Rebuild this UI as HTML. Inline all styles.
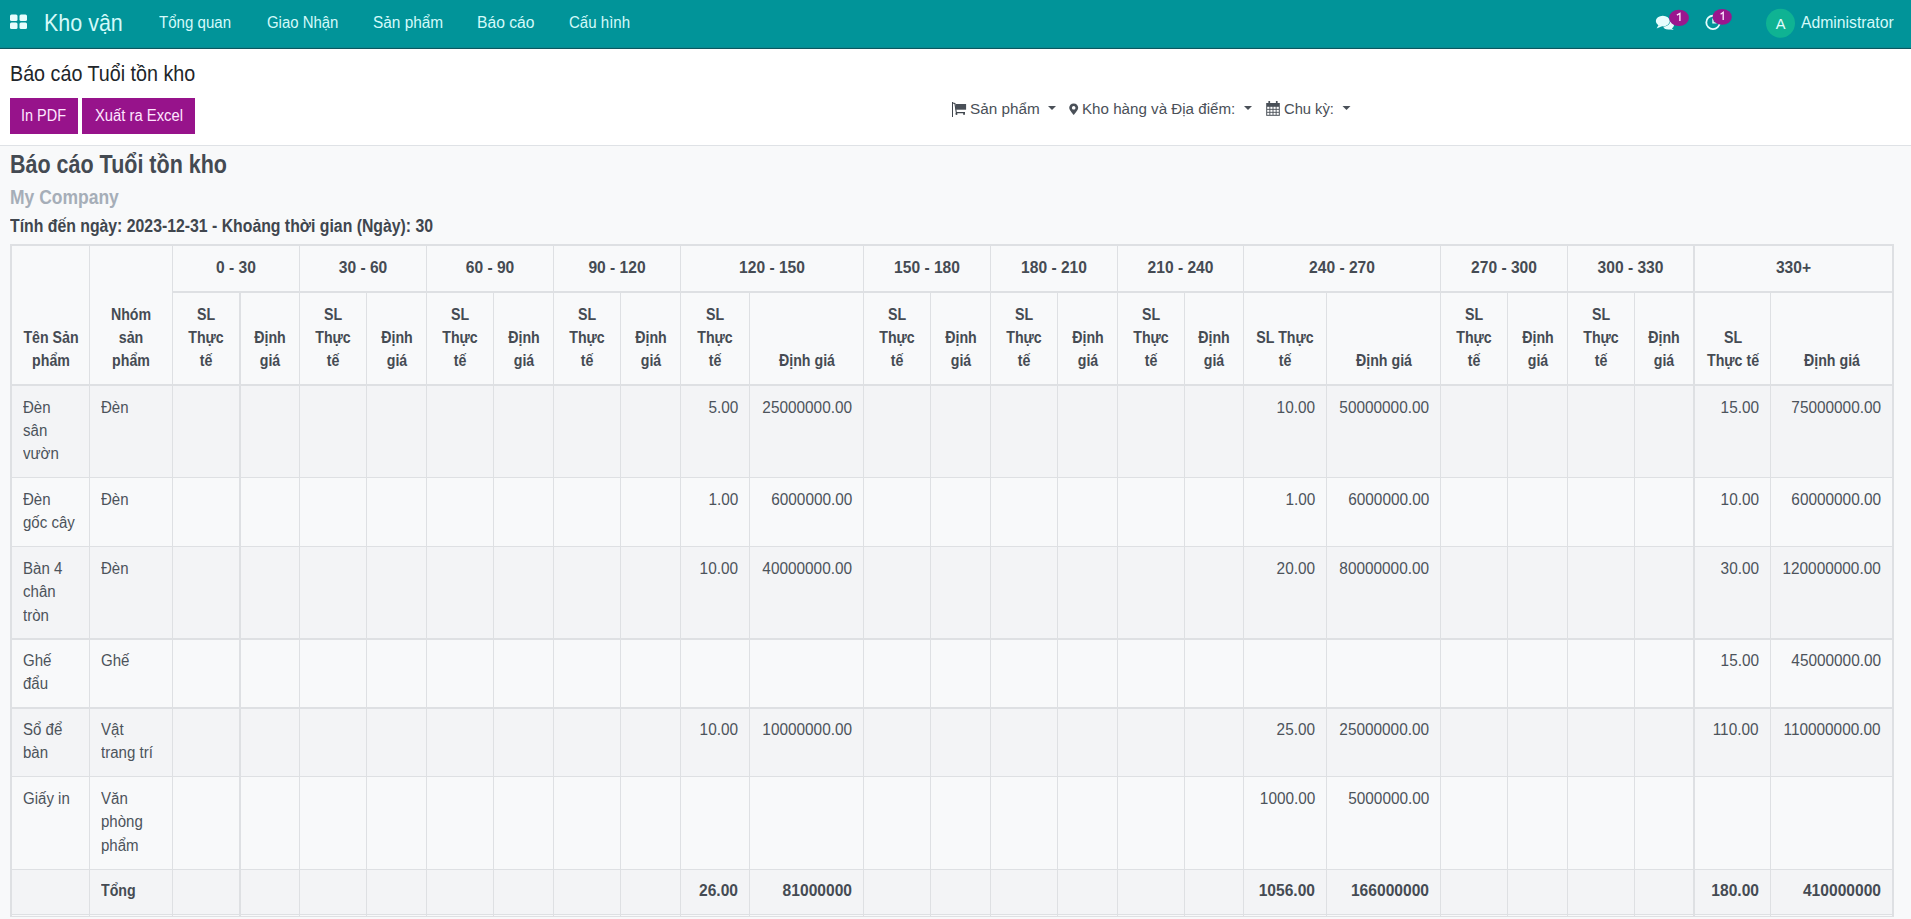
<!DOCTYPE html>
<html><head><meta charset="utf-8"><title>Báo cáo Tuổi tồn kho</title>
<style>
html,body{margin:0;padding:0;width:1911px;height:919px;overflow:hidden;background:#f8f9fa;}
body{position:relative;font-family:"Liberation Sans", sans-serif;}
.t{position:absolute;white-space:nowrap;line-height:1;}
</style></head><body>
<div style="position:absolute;left:0px;top:0px;width:1911px;height:48px;background:#019499;"></div><div style="position:absolute;left:0px;top:47px;width:1911px;height:1px;background:#0a8a92;"></div><div style="position:absolute;left:0px;top:48px;width:1911px;height:1px;background:#0b5860;"></div><div style="position:absolute;left:0px;top:49px;width:1911px;height:96px;background:#ffffff;"></div><div style="position:absolute;left:0px;top:145px;width:1911px;height:1px;background:#dfe2e6;"></div><div style="position:absolute;left:0px;top:146px;width:1911px;height:773px;background:#f8f9fa;"></div><div style="position:absolute;left:10px;top:386px;width:1884px;height:91px;background:#f3f4f6;"></div><div style="position:absolute;left:10px;top:547px;width:1884px;height:91px;background:#f3f4f6;"></div><div style="position:absolute;left:10px;top:709px;width:1884px;height:67px;background:#f3f4f6;"></div><div style="position:absolute;left:10px;top:870px;width:1884px;height:44px;background:#f3f4f6;"></div><div style="position:absolute;left:10px;top:244px;width:1884px;height:2px;background:#dee0e3;"></div><div style="position:absolute;left:10px;top:384px;width:1884px;height:2px;background:#dee0e3;"></div><div style="position:absolute;left:10px;top:477px;width:1884px;height:1px;background:#dee0e3;"></div><div style="position:absolute;left:10px;top:546px;width:1884px;height:1px;background:#dee0e3;"></div><div style="position:absolute;left:10px;top:638px;width:1884px;height:2px;background:#dee0e3;"></div><div style="position:absolute;left:10px;top:707px;width:1884px;height:2px;background:#dee0e3;"></div><div style="position:absolute;left:10px;top:776px;width:1884px;height:1px;background:#dee0e3;"></div><div style="position:absolute;left:10px;top:869px;width:1884px;height:1px;background:#dee0e3;"></div><div style="position:absolute;left:10px;top:914px;width:1884px;height:1px;background:#dee0e3;"></div><div style="position:absolute;left:10px;top:916px;width:1884px;height:1px;background:#dee0e3;"></div><div style="position:absolute;left:172px;top:291px;width:1722px;height:2px;background:#dee0e3;"></div><div style="position:absolute;left:10px;top:244px;width:2px;height:673px;background:#dee0e3;"></div><div style="position:absolute;left:89px;top:244px;width:1px;height:673px;background:#dee0e3;"></div><div style="position:absolute;left:172px;top:244px;width:1px;height:673px;background:#dee0e3;"></div><div style="position:absolute;left:239px;top:291px;width:2px;height:626px;background:#dee0e3;"></div><div style="position:absolute;left:299px;top:244px;width:1px;height:673px;background:#dee0e3;"></div><div style="position:absolute;left:366px;top:291px;width:1px;height:626px;background:#dee0e3;"></div><div style="position:absolute;left:426px;top:244px;width:1px;height:673px;background:#dee0e3;"></div><div style="position:absolute;left:493px;top:291px;width:1px;height:626px;background:#dee0e3;"></div><div style="position:absolute;left:553px;top:244px;width:1px;height:673px;background:#dee0e3;"></div><div style="position:absolute;left:620px;top:291px;width:1px;height:626px;background:#dee0e3;"></div><div style="position:absolute;left:680px;top:244px;width:1px;height:673px;background:#dee0e3;"></div><div style="position:absolute;left:749px;top:291px;width:1px;height:626px;background:#dee0e3;"></div><div style="position:absolute;left:863px;top:244px;width:1px;height:673px;background:#dee0e3;"></div><div style="position:absolute;left:930px;top:291px;width:1px;height:626px;background:#dee0e3;"></div><div style="position:absolute;left:990px;top:244px;width:1px;height:673px;background:#dee0e3;"></div><div style="position:absolute;left:1057px;top:291px;width:1px;height:626px;background:#dee0e3;"></div><div style="position:absolute;left:1117px;top:244px;width:1px;height:673px;background:#dee0e3;"></div><div style="position:absolute;left:1184px;top:291px;width:1px;height:626px;background:#dee0e3;"></div><div style="position:absolute;left:1243px;top:244px;width:1px;height:673px;background:#dee0e3;"></div><div style="position:absolute;left:1326px;top:291px;width:1px;height:626px;background:#dee0e3;"></div><div style="position:absolute;left:1440px;top:244px;width:1px;height:673px;background:#dee0e3;"></div><div style="position:absolute;left:1507px;top:291px;width:1px;height:626px;background:#dee0e3;"></div><div style="position:absolute;left:1567px;top:244px;width:1px;height:673px;background:#dee0e3;"></div><div style="position:absolute;left:1634px;top:291px;width:1px;height:626px;background:#dee0e3;"></div><div style="position:absolute;left:1693px;top:244px;width:2px;height:673px;background:#dee0e3;"></div><div style="position:absolute;left:1770px;top:291px;width:1px;height:626px;background:#dee0e3;"></div><div style="position:absolute;left:1892px;top:244px;width:2px;height:673px;background:#dee0e3;"></div><div style="position:absolute;left:10px;top:98px;width:68px;height:36px;background:#97138b;"></div><div style="position:absolute;left:82px;top:98px;width:113px;height:36px;background:#97138b;"></div><div class="t" id="t0" style="left:-64.00px;width:600px;text-align:center;top:259.79px;font-size:15.6px;color:#454b53;font-weight:700;">0 - 30</div><div class="t" id="t1" style="left:63.00px;width:600px;text-align:center;top:259.79px;font-size:15.6px;color:#454b53;font-weight:700;">30 - 60</div><div class="t" id="t2" style="left:190.00px;width:600px;text-align:center;top:259.79px;font-size:15.6px;color:#454b53;font-weight:700;">60 - 90</div><div class="t" id="t3" style="left:317.00px;width:600px;text-align:center;top:259.79px;font-size:15.6px;color:#454b53;font-weight:700;">90 - 120</div><div class="t" id="t4" style="left:472.00px;width:600px;text-align:center;top:259.79px;font-size:15.6px;color:#454b53;font-weight:700;">120 - 150</div><div class="t" id="t5" style="left:627.00px;width:600px;text-align:center;top:259.79px;font-size:15.6px;color:#454b53;font-weight:700;">150 - 180</div><div class="t" id="t6" style="left:754.00px;width:600px;text-align:center;top:259.79px;font-size:15.6px;color:#454b53;font-weight:700;">180 - 210</div><div class="t" id="t7" style="left:880.50px;width:600px;text-align:center;top:259.79px;font-size:15.6px;color:#454b53;font-weight:700;">210 - 240</div><div class="t" id="t8" style="left:1042.00px;width:600px;text-align:center;top:259.79px;font-size:15.6px;color:#454b53;font-weight:700;">240 - 270</div><div class="t" id="t9" style="left:1204.00px;width:600px;text-align:center;top:259.79px;font-size:15.6px;color:#454b53;font-weight:700;">270 - 300</div><div class="t" id="t10" style="left:1330.50px;width:600px;text-align:center;top:259.79px;font-size:15.6px;color:#454b53;font-weight:700;">300 - 330</div><div class="t" id="t11" style="left:1493.50px;width:600px;text-align:center;top:259.79px;font-size:15.6px;color:#454b53;font-weight:700;">330+</div><div class="t" id="t12" style="left:-249.50px;width:600px;text-align:center;top:329.79px;font-size:15.6px;color:#454b53;font-weight:700;transform:scaleX(0.9100);transform-origin:50% 0;">Tên Sản</div><div class="t" id="t13" style="left:-249.50px;width:600px;text-align:center;top:352.79px;font-size:15.6px;color:#454b53;font-weight:700;transform:scaleX(0.9100);transform-origin:50% 0;">phẩm</div><div class="t" id="t14" style="left:-169.00px;width:600px;text-align:center;top:306.79px;font-size:15.6px;color:#454b53;font-weight:700;transform:scaleX(0.9100);transform-origin:50% 0;">Nhóm</div><div class="t" id="t15" style="left:-169.00px;width:600px;text-align:center;top:329.79px;font-size:15.6px;color:#454b53;font-weight:700;transform:scaleX(0.9100);transform-origin:50% 0;">sản</div><div class="t" id="t16" style="left:-169.00px;width:600px;text-align:center;top:352.79px;font-size:15.6px;color:#454b53;font-weight:700;transform:scaleX(0.9100);transform-origin:50% 0;">phẩm</div><div class="t" id="t17" style="left:-94.00px;width:600px;text-align:center;top:306.79px;font-size:15.6px;color:#454b53;font-weight:700;transform:scaleX(0.9100);transform-origin:50% 0;">SL</div><div class="t" id="t18" style="left:-94.00px;width:600px;text-align:center;top:329.79px;font-size:15.6px;color:#454b53;font-weight:700;transform:scaleX(0.9100);transform-origin:50% 0;">Thực</div><div class="t" id="t19" style="left:-94.00px;width:600px;text-align:center;top:352.79px;font-size:15.6px;color:#454b53;font-weight:700;transform:scaleX(0.9100);transform-origin:50% 0;">tế</div><div class="t" id="t20" style="left:-30.00px;width:600px;text-align:center;top:329.79px;font-size:15.6px;color:#454b53;font-weight:700;transform:scaleX(0.9100);transform-origin:50% 0;">Định</div><div class="t" id="t21" style="left:-30.00px;width:600px;text-align:center;top:352.79px;font-size:15.6px;color:#454b53;font-weight:700;transform:scaleX(0.9100);transform-origin:50% 0;">giá</div><div class="t" id="t22" style="left:33.00px;width:600px;text-align:center;top:306.79px;font-size:15.6px;color:#454b53;font-weight:700;transform:scaleX(0.9100);transform-origin:50% 0;">SL</div><div class="t" id="t23" style="left:33.00px;width:600px;text-align:center;top:329.79px;font-size:15.6px;color:#454b53;font-weight:700;transform:scaleX(0.9100);transform-origin:50% 0;">Thực</div><div class="t" id="t24" style="left:33.00px;width:600px;text-align:center;top:352.79px;font-size:15.6px;color:#454b53;font-weight:700;transform:scaleX(0.9100);transform-origin:50% 0;">tế</div><div class="t" id="t25" style="left:96.50px;width:600px;text-align:center;top:329.79px;font-size:15.6px;color:#454b53;font-weight:700;transform:scaleX(0.9100);transform-origin:50% 0;">Định</div><div class="t" id="t26" style="left:96.50px;width:600px;text-align:center;top:352.79px;font-size:15.6px;color:#454b53;font-weight:700;transform:scaleX(0.9100);transform-origin:50% 0;">giá</div><div class="t" id="t27" style="left:160.00px;width:600px;text-align:center;top:306.79px;font-size:15.6px;color:#454b53;font-weight:700;transform:scaleX(0.9100);transform-origin:50% 0;">SL</div><div class="t" id="t28" style="left:160.00px;width:600px;text-align:center;top:329.79px;font-size:15.6px;color:#454b53;font-weight:700;transform:scaleX(0.9100);transform-origin:50% 0;">Thực</div><div class="t" id="t29" style="left:160.00px;width:600px;text-align:center;top:352.79px;font-size:15.6px;color:#454b53;font-weight:700;transform:scaleX(0.9100);transform-origin:50% 0;">tế</div><div class="t" id="t30" style="left:223.50px;width:600px;text-align:center;top:329.79px;font-size:15.6px;color:#454b53;font-weight:700;transform:scaleX(0.9100);transform-origin:50% 0;">Định</div><div class="t" id="t31" style="left:223.50px;width:600px;text-align:center;top:352.79px;font-size:15.6px;color:#454b53;font-weight:700;transform:scaleX(0.9100);transform-origin:50% 0;">giá</div><div class="t" id="t32" style="left:287.00px;width:600px;text-align:center;top:306.79px;font-size:15.6px;color:#454b53;font-weight:700;transform:scaleX(0.9100);transform-origin:50% 0;">SL</div><div class="t" id="t33" style="left:287.00px;width:600px;text-align:center;top:329.79px;font-size:15.6px;color:#454b53;font-weight:700;transform:scaleX(0.9100);transform-origin:50% 0;">Thực</div><div class="t" id="t34" style="left:287.00px;width:600px;text-align:center;top:352.79px;font-size:15.6px;color:#454b53;font-weight:700;transform:scaleX(0.9100);transform-origin:50% 0;">tế</div><div class="t" id="t35" style="left:350.50px;width:600px;text-align:center;top:329.79px;font-size:15.6px;color:#454b53;font-weight:700;transform:scaleX(0.9100);transform-origin:50% 0;">Định</div><div class="t" id="t36" style="left:350.50px;width:600px;text-align:center;top:352.79px;font-size:15.6px;color:#454b53;font-weight:700;transform:scaleX(0.9100);transform-origin:50% 0;">giá</div><div class="t" id="t37" style="left:415.00px;width:600px;text-align:center;top:306.79px;font-size:15.6px;color:#454b53;font-weight:700;transform:scaleX(0.9100);transform-origin:50% 0;">SL</div><div class="t" id="t38" style="left:415.00px;width:600px;text-align:center;top:329.79px;font-size:15.6px;color:#454b53;font-weight:700;transform:scaleX(0.9100);transform-origin:50% 0;">Thực</div><div class="t" id="t39" style="left:415.00px;width:600px;text-align:center;top:352.79px;font-size:15.6px;color:#454b53;font-weight:700;transform:scaleX(0.9100);transform-origin:50% 0;">tế</div><div class="t" id="t40" style="left:506.50px;width:600px;text-align:center;top:352.79px;font-size:15.6px;color:#454b53;font-weight:700;transform:scaleX(0.9100);transform-origin:50% 0;">Định giá</div><div class="t" id="t41" style="left:597.00px;width:600px;text-align:center;top:306.79px;font-size:15.6px;color:#454b53;font-weight:700;transform:scaleX(0.9100);transform-origin:50% 0;">SL</div><div class="t" id="t42" style="left:597.00px;width:600px;text-align:center;top:329.79px;font-size:15.6px;color:#454b53;font-weight:700;transform:scaleX(0.9100);transform-origin:50% 0;">Thực</div><div class="t" id="t43" style="left:597.00px;width:600px;text-align:center;top:352.79px;font-size:15.6px;color:#454b53;font-weight:700;transform:scaleX(0.9100);transform-origin:50% 0;">tế</div><div class="t" id="t44" style="left:660.50px;width:600px;text-align:center;top:329.79px;font-size:15.6px;color:#454b53;font-weight:700;transform:scaleX(0.9100);transform-origin:50% 0;">Định</div><div class="t" id="t45" style="left:660.50px;width:600px;text-align:center;top:352.79px;font-size:15.6px;color:#454b53;font-weight:700;transform:scaleX(0.9100);transform-origin:50% 0;">giá</div><div class="t" id="t46" style="left:724.00px;width:600px;text-align:center;top:306.79px;font-size:15.6px;color:#454b53;font-weight:700;transform:scaleX(0.9100);transform-origin:50% 0;">SL</div><div class="t" id="t47" style="left:724.00px;width:600px;text-align:center;top:329.79px;font-size:15.6px;color:#454b53;font-weight:700;transform:scaleX(0.9100);transform-origin:50% 0;">Thực</div><div class="t" id="t48" style="left:724.00px;width:600px;text-align:center;top:352.79px;font-size:15.6px;color:#454b53;font-weight:700;transform:scaleX(0.9100);transform-origin:50% 0;">tế</div><div class="t" id="t49" style="left:787.50px;width:600px;text-align:center;top:329.79px;font-size:15.6px;color:#454b53;font-weight:700;transform:scaleX(0.9100);transform-origin:50% 0;">Định</div><div class="t" id="t50" style="left:787.50px;width:600px;text-align:center;top:352.79px;font-size:15.6px;color:#454b53;font-weight:700;transform:scaleX(0.9100);transform-origin:50% 0;">giá</div><div class="t" id="t51" style="left:851.00px;width:600px;text-align:center;top:306.79px;font-size:15.6px;color:#454b53;font-weight:700;transform:scaleX(0.9100);transform-origin:50% 0;">SL</div><div class="t" id="t52" style="left:851.00px;width:600px;text-align:center;top:329.79px;font-size:15.6px;color:#454b53;font-weight:700;transform:scaleX(0.9100);transform-origin:50% 0;">Thực</div><div class="t" id="t53" style="left:851.00px;width:600px;text-align:center;top:352.79px;font-size:15.6px;color:#454b53;font-weight:700;transform:scaleX(0.9100);transform-origin:50% 0;">tế</div><div class="t" id="t54" style="left:914.00px;width:600px;text-align:center;top:329.79px;font-size:15.6px;color:#454b53;font-weight:700;transform:scaleX(0.9100);transform-origin:50% 0;">Định</div><div class="t" id="t55" style="left:914.00px;width:600px;text-align:center;top:352.79px;font-size:15.6px;color:#454b53;font-weight:700;transform:scaleX(0.9100);transform-origin:50% 0;">giá</div><div class="t" id="t56" style="left:985.00px;width:600px;text-align:center;top:329.79px;font-size:15.6px;color:#454b53;font-weight:700;transform:scaleX(0.9100);transform-origin:50% 0;">SL Thực</div><div class="t" id="t57" style="left:985.00px;width:600px;text-align:center;top:352.79px;font-size:15.6px;color:#454b53;font-weight:700;transform:scaleX(0.9100);transform-origin:50% 0;">tế</div><div class="t" id="t58" style="left:1083.50px;width:600px;text-align:center;top:352.79px;font-size:15.6px;color:#454b53;font-weight:700;transform:scaleX(0.9100);transform-origin:50% 0;">Định giá</div><div class="t" id="t59" style="left:1174.00px;width:600px;text-align:center;top:306.79px;font-size:15.6px;color:#454b53;font-weight:700;transform:scaleX(0.9100);transform-origin:50% 0;">SL</div><div class="t" id="t60" style="left:1174.00px;width:600px;text-align:center;top:329.79px;font-size:15.6px;color:#454b53;font-weight:700;transform:scaleX(0.9100);transform-origin:50% 0;">Thực</div><div class="t" id="t61" style="left:1174.00px;width:600px;text-align:center;top:352.79px;font-size:15.6px;color:#454b53;font-weight:700;transform:scaleX(0.9100);transform-origin:50% 0;">tế</div><div class="t" id="t62" style="left:1237.50px;width:600px;text-align:center;top:329.79px;font-size:15.6px;color:#454b53;font-weight:700;transform:scaleX(0.9100);transform-origin:50% 0;">Định</div><div class="t" id="t63" style="left:1237.50px;width:600px;text-align:center;top:352.79px;font-size:15.6px;color:#454b53;font-weight:700;transform:scaleX(0.9100);transform-origin:50% 0;">giá</div><div class="t" id="t64" style="left:1301.00px;width:600px;text-align:center;top:306.79px;font-size:15.6px;color:#454b53;font-weight:700;transform:scaleX(0.9100);transform-origin:50% 0;">SL</div><div class="t" id="t65" style="left:1301.00px;width:600px;text-align:center;top:329.79px;font-size:15.6px;color:#454b53;font-weight:700;transform:scaleX(0.9100);transform-origin:50% 0;">Thực</div><div class="t" id="t66" style="left:1301.00px;width:600px;text-align:center;top:352.79px;font-size:15.6px;color:#454b53;font-weight:700;transform:scaleX(0.9100);transform-origin:50% 0;">tế</div><div class="t" id="t67" style="left:1364.00px;width:600px;text-align:center;top:329.79px;font-size:15.6px;color:#454b53;font-weight:700;transform:scaleX(0.9100);transform-origin:50% 0;">Định</div><div class="t" id="t68" style="left:1364.00px;width:600px;text-align:center;top:352.79px;font-size:15.6px;color:#454b53;font-weight:700;transform:scaleX(0.9100);transform-origin:50% 0;">giá</div><div class="t" id="t69" style="left:1432.50px;width:600px;text-align:center;top:329.79px;font-size:15.6px;color:#454b53;font-weight:700;transform:scaleX(0.9100);transform-origin:50% 0;">SL</div><div class="t" id="t70" style="left:1432.50px;width:600px;text-align:center;top:352.79px;font-size:15.6px;color:#454b53;font-weight:700;transform:scaleX(0.9100);transform-origin:50% 0;">Thực tế</div><div class="t" id="t71" style="left:1531.50px;width:600px;text-align:center;top:352.79px;font-size:15.6px;color:#454b53;font-weight:700;transform:scaleX(0.9100);transform-origin:50% 0;">Định giá</div><div class="t" id="t72" style="left:23.00px;top:399.79px;font-size:15.6px;color:#4c535b;font-weight:400;transform:scaleX(0.9650);transform-origin:0 0;">Đèn</div><div class="t" id="t73" style="left:23.00px;top:422.79px;font-size:15.6px;color:#4c535b;font-weight:400;transform:scaleX(0.9650);transform-origin:0 0;">sân</div><div class="t" id="t74" style="left:23.00px;top:445.79px;font-size:15.6px;color:#4c535b;font-weight:400;transform:scaleX(0.9650);transform-origin:0 0;">vườn</div><div class="t" id="t75" style="left:101.00px;top:399.79px;font-size:15.6px;color:#4c535b;font-weight:400;transform:scaleX(0.9650);transform-origin:0 0;">Đèn</div><div class="t" id="t76" style="right:1173.00px;top:399.79px;font-size:15.6px;color:#4c535b;font-weight:400;transform:scaleX(0.9850);transform-origin:100% 0;">5.00</div><div class="t" id="t77" style="right:1059.00px;top:399.79px;font-size:15.6px;color:#4c535b;font-weight:400;transform:scaleX(0.9850);transform-origin:100% 0;">25000000.00</div><div class="t" id="t78" style="right:596.00px;top:399.79px;font-size:15.6px;color:#4c535b;font-weight:400;transform:scaleX(0.9850);transform-origin:100% 0;">10.00</div><div class="t" id="t79" style="right:482.00px;top:399.79px;font-size:15.6px;color:#4c535b;font-weight:400;transform:scaleX(0.9850);transform-origin:100% 0;">50000000.00</div><div class="t" id="t80" style="right:152.00px;top:399.79px;font-size:15.6px;color:#4c535b;font-weight:400;transform:scaleX(0.9850);transform-origin:100% 0;">15.00</div><div class="t" id="t81" style="right:30.00px;top:399.79px;font-size:15.6px;color:#4c535b;font-weight:400;transform:scaleX(0.9850);transform-origin:100% 0;">75000000.00</div><div class="t" id="t82" style="left:23.00px;top:491.79px;font-size:15.6px;color:#4c535b;font-weight:400;transform:scaleX(0.9650);transform-origin:0 0;">Đèn</div><div class="t" id="t83" style="left:23.00px;top:514.79px;font-size:15.6px;color:#4c535b;font-weight:400;transform:scaleX(0.9650);transform-origin:0 0;">gốc cây</div><div class="t" id="t84" style="left:101.00px;top:491.79px;font-size:15.6px;color:#4c535b;font-weight:400;transform:scaleX(0.9650);transform-origin:0 0;">Đèn</div><div class="t" id="t85" style="right:1173.00px;top:491.79px;font-size:15.6px;color:#4c535b;font-weight:400;transform:scaleX(0.9850);transform-origin:100% 0;">1.00</div><div class="t" id="t86" style="right:1059.00px;top:491.79px;font-size:15.6px;color:#4c535b;font-weight:400;transform:scaleX(0.9850);transform-origin:100% 0;">6000000.00</div><div class="t" id="t87" style="right:596.00px;top:491.79px;font-size:15.6px;color:#4c535b;font-weight:400;transform:scaleX(0.9850);transform-origin:100% 0;">1.00</div><div class="t" id="t88" style="right:482.00px;top:491.79px;font-size:15.6px;color:#4c535b;font-weight:400;transform:scaleX(0.9850);transform-origin:100% 0;">6000000.00</div><div class="t" id="t89" style="right:152.00px;top:491.79px;font-size:15.6px;color:#4c535b;font-weight:400;transform:scaleX(0.9850);transform-origin:100% 0;">10.00</div><div class="t" id="t90" style="right:30.00px;top:491.79px;font-size:15.6px;color:#4c535b;font-weight:400;transform:scaleX(0.9850);transform-origin:100% 0;">60000000.00</div><div class="t" id="t91" style="left:23.00px;top:560.79px;font-size:15.6px;color:#4c535b;font-weight:400;transform:scaleX(0.9650);transform-origin:0 0;">Bàn 4</div><div class="t" id="t92" style="left:23.00px;top:583.79px;font-size:15.6px;color:#4c535b;font-weight:400;transform:scaleX(0.9650);transform-origin:0 0;">chân</div><div class="t" id="t93" style="left:23.00px;top:607.79px;font-size:15.6px;color:#4c535b;font-weight:400;transform:scaleX(0.9650);transform-origin:0 0;">tròn</div><div class="t" id="t94" style="left:101.00px;top:560.79px;font-size:15.6px;color:#4c535b;font-weight:400;transform:scaleX(0.9650);transform-origin:0 0;">Đèn</div><div class="t" id="t95" style="right:1173.00px;top:560.79px;font-size:15.6px;color:#4c535b;font-weight:400;transform:scaleX(0.9850);transform-origin:100% 0;">10.00</div><div class="t" id="t96" style="right:1059.00px;top:560.79px;font-size:15.6px;color:#4c535b;font-weight:400;transform:scaleX(0.9850);transform-origin:100% 0;">40000000.00</div><div class="t" id="t97" style="right:596.00px;top:560.79px;font-size:15.6px;color:#4c535b;font-weight:400;transform:scaleX(0.9850);transform-origin:100% 0;">20.00</div><div class="t" id="t98" style="right:482.00px;top:560.79px;font-size:15.6px;color:#4c535b;font-weight:400;transform:scaleX(0.9850);transform-origin:100% 0;">80000000.00</div><div class="t" id="t99" style="right:152.00px;top:560.79px;font-size:15.6px;color:#4c535b;font-weight:400;transform:scaleX(0.9850);transform-origin:100% 0;">30.00</div><div class="t" id="t100" style="right:30.00px;top:560.79px;font-size:15.6px;color:#4c535b;font-weight:400;transform:scaleX(0.9850);transform-origin:100% 0;">120000000.00</div><div class="t" id="t101" style="left:23.00px;top:652.79px;font-size:15.6px;color:#4c535b;font-weight:400;transform:scaleX(0.9650);transform-origin:0 0;">Ghế</div><div class="t" id="t102" style="left:23.00px;top:675.79px;font-size:15.6px;color:#4c535b;font-weight:400;transform:scaleX(0.9650);transform-origin:0 0;">đẩu</div><div class="t" id="t103" style="left:101.00px;top:652.79px;font-size:15.6px;color:#4c535b;font-weight:400;transform:scaleX(0.9650);transform-origin:0 0;">Ghế</div><div class="t" id="t104" style="right:152.00px;top:652.79px;font-size:15.6px;color:#4c535b;font-weight:400;transform:scaleX(0.9850);transform-origin:100% 0;">15.00</div><div class="t" id="t105" style="right:30.00px;top:652.79px;font-size:15.6px;color:#4c535b;font-weight:400;transform:scaleX(0.9850);transform-origin:100% 0;">45000000.00</div><div class="t" id="t106" style="left:23.00px;top:721.79px;font-size:15.6px;color:#4c535b;font-weight:400;transform:scaleX(0.9650);transform-origin:0 0;">Sổ để</div><div class="t" id="t107" style="left:23.00px;top:744.79px;font-size:15.6px;color:#4c535b;font-weight:400;transform:scaleX(0.9650);transform-origin:0 0;">bàn</div><div class="t" id="t108" style="left:101.00px;top:721.79px;font-size:15.6px;color:#4c535b;font-weight:400;transform:scaleX(0.9650);transform-origin:0 0;">Vật</div><div class="t" id="t109" style="left:101.00px;top:744.79px;font-size:15.6px;color:#4c535b;font-weight:400;transform:scaleX(0.9650);transform-origin:0 0;">trang trí</div><div class="t" id="t110" style="right:1173.00px;top:721.79px;font-size:15.6px;color:#4c535b;font-weight:400;transform:scaleX(0.9850);transform-origin:100% 0;">10.00</div><div class="t" id="t111" style="right:1059.00px;top:721.79px;font-size:15.6px;color:#4c535b;font-weight:400;transform:scaleX(0.9850);transform-origin:100% 0;">10000000.00</div><div class="t" id="t112" style="right:596.00px;top:721.79px;font-size:15.6px;color:#4c535b;font-weight:400;transform:scaleX(0.9850);transform-origin:100% 0;">25.00</div><div class="t" id="t113" style="right:482.00px;top:721.79px;font-size:15.6px;color:#4c535b;font-weight:400;transform:scaleX(0.9850);transform-origin:100% 0;">25000000.00</div><div class="t" id="t114" style="right:152.00px;top:721.79px;font-size:15.6px;color:#4c535b;font-weight:400;transform:scaleX(0.9850);transform-origin:100% 0;">110.00</div><div class="t" id="t115" style="right:30.00px;top:721.79px;font-size:15.6px;color:#4c535b;font-weight:400;transform:scaleX(0.9850);transform-origin:100% 0;">110000000.00</div><div class="t" id="t116" style="left:23.00px;top:790.79px;font-size:15.6px;color:#4c535b;font-weight:400;transform:scaleX(0.9650);transform-origin:0 0;">Giấy in</div><div class="t" id="t117" style="left:101.00px;top:790.79px;font-size:15.6px;color:#4c535b;font-weight:400;transform:scaleX(0.9650);transform-origin:0 0;">Văn</div><div class="t" id="t118" style="left:101.00px;top:813.79px;font-size:15.6px;color:#4c535b;font-weight:400;transform:scaleX(0.9650);transform-origin:0 0;">phòng</div><div class="t" id="t119" style="left:101.00px;top:837.79px;font-size:15.6px;color:#4c535b;font-weight:400;transform:scaleX(0.9650);transform-origin:0 0;">phẩm</div><div class="t" id="t120" style="right:596.00px;top:790.79px;font-size:15.6px;color:#4c535b;font-weight:400;transform:scaleX(0.9850);transform-origin:100% 0;">1000.00</div><div class="t" id="t121" style="right:482.00px;top:790.79px;font-size:15.6px;color:#4c535b;font-weight:400;transform:scaleX(0.9850);transform-origin:100% 0;">5000000.00</div><div class="t" id="t122" style="left:101.00px;top:882.79px;font-size:15.6px;color:#454b53;font-weight:700;transform:scaleX(0.9100);transform-origin:0 0;">Tổng</div><div class="t" id="t123" style="right:1173.00px;top:882.79px;font-size:15.6px;color:#454b53;font-weight:700;">26.00</div><div class="t" id="t124" style="right:1059.00px;top:882.79px;font-size:15.6px;color:#454b53;font-weight:700;">81000000</div><div class="t" id="t125" style="right:596.00px;top:882.79px;font-size:15.6px;color:#454b53;font-weight:700;">1056.00</div><div class="t" id="t126" style="right:482.00px;top:882.79px;font-size:15.6px;color:#454b53;font-weight:700;">166000000</div><div class="t" id="t127" style="right:152.00px;top:882.79px;font-size:15.6px;color:#454b53;font-weight:700;">180.00</div><div class="t" id="t128" style="right:30.00px;top:882.79px;font-size:15.6px;color:#454b53;font-weight:700;">410000000</div><div class="t" id="t129" style="left:10.15px;top:151.98px;font-size:25.3px;color:#444a52;font-weight:700;transform:scaleX(0.8498);transform-origin:0 0;">Báo cáo Tuổi tồn kho</div><div class="t" id="t130" style="left:9.53px;top:187.98px;font-size:19.4px;color:#a6aeb8;font-weight:700;transform:scaleX(0.9017);transform-origin:0 0;">My Company</div><div class="t" id="t131" style="left:10.43px;top:218.20px;font-size:17.6px;color:#40464e;font-weight:700;transform:scaleX(0.8983);transform-origin:0 0;">Tính đến ngày: 2023-12-31 - Khoảng thời gian (Ngày): 30</div><div class="t" id="t132" style="left:9.50px;top:64.07px;font-size:21.3px;color:#212529;font-weight:400;transform:scaleX(0.9258);transform-origin:0 0;">Báo cáo Tuổi tồn kho</div><div class="t" id="t133" style="left:20.92px;top:107.69px;font-size:15.6px;color:#ffe6ff;font-weight:400;transform:scaleX(0.9277);transform-origin:0 0;">In PDF</div><div class="t" id="t134" style="left:94.61px;top:107.69px;font-size:15.6px;color:#ffe6ff;font-weight:400;transform:scaleX(0.9489);transform-origin:0 0;">Xuất ra Excel</div><div class="t" id="t135" style="left:969.61px;top:100.86px;font-size:15.4px;color:#4a5058;font-weight:400;transform:scaleX(0.9941);transform-origin:0 0;">Sản phẩm</div><div class="t" id="t136" style="left:1082.21px;top:100.86px;font-size:15.4px;color:#4a5058;font-weight:400;transform:scaleX(0.9844);transform-origin:0 0;">Kho hàng và Địa điểm:</div><div class="t" id="t137" style="left:1284.22px;top:100.86px;font-size:15.4px;color:#4a5058;font-weight:400;transform:scaleX(0.9569);transform-origin:0 0;">Chu kỳ:</div><div class="t" id="t138" style="left:44.16px;top:11.59px;font-size:23.4px;color:#d4fafa;font-weight:400;transform:scaleX(0.9181);transform-origin:0 0;">Kho vận</div><div class="t" id="t139" style="left:159.00px;top:15.09px;font-size:15.6px;color:#d4fafa;font-weight:400;transform:scaleX(0.9662);transform-origin:0 0;">Tổng quan</div><div class="t" id="t140" style="left:266.61px;top:15.09px;font-size:15.6px;color:#d4fafa;font-weight:400;transform:scaleX(0.9568);transform-origin:0 0;">Giao Nhận</div><div class="t" id="t141" style="left:372.81px;top:15.09px;font-size:15.6px;color:#d4fafa;font-weight:400;transform:scaleX(0.9870);transform-origin:0 0;">Sản phẩm</div><div class="t" id="t142" style="left:476.79px;top:15.09px;font-size:15.6px;color:#d4fafa;font-weight:400;transform:scaleX(1.0036);transform-origin:0 0;">Báo cáo</div><div class="t" id="t143" style="left:569.02px;top:15.09px;font-size:15.6px;color:#d4fafa;font-weight:400;transform:scaleX(0.9645);transform-origin:0 0;">Cấu hình</div><div class="t" id="t144" style="left:1801.20px;top:15.09px;font-size:15.6px;color:#d4fafa;font-weight:400;transform:scaleX(1.0087);transform-origin:0 0;">Administrator</div>

<svg style="position:absolute;left:0;top:0" width="1911" height="919">
 <!-- app grid -->
 <g fill="#e6fdfd">
  <rect x="10" y="14.5" width="7.5" height="6.5" rx="1.5"/>
  <rect x="19.5" y="14.5" width="7.5" height="6.5" rx="1.5"/>
  <rect x="10" y="22.5" width="7.5" height="6.5" rx="1.5"/>
  <rect x="19.5" y="22.5" width="7.5" height="6.5" rx="1.5"/>
 </g>
 <!-- chat -->
 <g fill="#e6fdfd">
  <ellipse cx="1668.3" cy="25.2" rx="5.6" ry="4.2"/>
  <path d="M1670.5 27.5 L1673.8 29.9 L1666.5 28.8 Z"/>
 </g>
 <ellipse cx="1662.8" cy="21" rx="7.6" ry="5.8" fill="#019499"/>
 <g fill="#e6fdfd">
  <ellipse cx="1662.8" cy="21" rx="7" ry="5.2"/>
  <path d="M1658.5 25 L1656.6 28.4 L1662.5 25.9 Z"/>
 </g>
 <!-- clock -->
 <circle cx="1713" cy="22.45" r="6.7" fill="none" stroke="#e6fdfd" stroke-width="1.8"/>
 <path d="M1713 18.5 V22.9 H1716.5" fill="none" stroke="#e6fdfd" stroke-width="1.4"/>
 <!-- badges -->
 <ellipse cx="1679" cy="17.9" rx="9.9" ry="8.2" fill="#9a178e"/>
 <ellipse cx="1722.2" cy="16.9" rx="9.6" ry="7.9" fill="#9a178e"/>
 <path d="M1676.9 15.2 L1679.9 13.4 V21" fill="none" stroke="#ffe6ff" stroke-width="1.35"/>
 <path d="M1720.6 14.2 L1723.2 12.3 V20" fill="none" stroke="#ffe6ff" stroke-width="1.35"/>
 <!-- avatar -->
 <circle cx="1780.5" cy="23.2" r="14.5" fill="#0fb393"/>
 <!-- filter icons -->
 <rect x="952" y="102" width="1" height="15" fill="#3f454d"/>
 <path d="M952.6 103 L954.9 103.4 L956.6 114.5 M956 112.6 H965" fill="none" stroke="#3f454d" stroke-width="1.1"/>
 <rect x="955.6" y="104" width="10.5" height="5.7" fill="#4a5058"/>
 <rect x="955.6" y="113" width="1.7" height="1.8" fill="#3f454d"/><rect x="963.2" y="113" width="1.7" height="1.8" fill="#3f454d"/>
 <path d="M1048 106 H1056 L1052 110 Z" fill="#4a5058"/>
 <path d="M1244 106 H1252 L1248 110 Z" fill="#4a5058"/>
 <path d="M1342.5 106 H1350.5 L1346.5 110 Z" fill="#4a5058"/>
 <path d="M1073.7 103.4 C1071 103.4 1069.2 105.4 1069.2 107.8 C1069.2 110.2 1073.7 115 1073.7 115 C1073.7 115 1078.2 110.2 1078.2 107.8 C1078.2 105.4 1076.4 103.4 1073.7 103.4 Z M1073.7 106 A1.8 1.8 0 1 1 1073.69 106 Z" fill="#4a5058" fill-rule="evenodd"/>
 <rect x="1266.2" y="103" width="13.6" height="12.8" fill="#4a5058"/>
 <rect x="1267.20" y="106.80" width="2.22" height="2.07" fill="#ffffff"/><rect x="1267.20" y="109.77" width="2.22" height="2.07" fill="#ffffff"/><rect x="1267.20" y="112.74" width="2.22" height="2.07" fill="#ffffff"/><rect x="1270.33" y="106.80" width="2.22" height="2.07" fill="#ffffff"/><rect x="1270.33" y="109.77" width="2.22" height="2.07" fill="#ffffff"/><rect x="1270.33" y="112.74" width="2.22" height="2.07" fill="#ffffff"/><rect x="1273.45" y="106.80" width="2.22" height="2.07" fill="#ffffff"/><rect x="1273.45" y="109.77" width="2.22" height="2.07" fill="#ffffff"/><rect x="1273.45" y="112.74" width="2.22" height="2.07" fill="#ffffff"/><rect x="1276.58" y="106.80" width="2.22" height="2.07" fill="#ffffff"/><rect x="1276.58" y="109.77" width="2.22" height="2.07" fill="#ffffff"/><rect x="1276.58" y="112.74" width="2.22" height="2.07" fill="#ffffff"/>
 <rect x="1268.4" y="101" width="1.7" height="3.2" fill="#4a5058"/><rect x="1275.9" y="101" width="1.7" height="3.2" fill="#4a5058"/>
</svg>


<div class="t" style="left:1770.7px;top:16.8px;font-size:14.6px;color:#e6fdfd;width:20px;text-align:center">A</div>

</body></html>
